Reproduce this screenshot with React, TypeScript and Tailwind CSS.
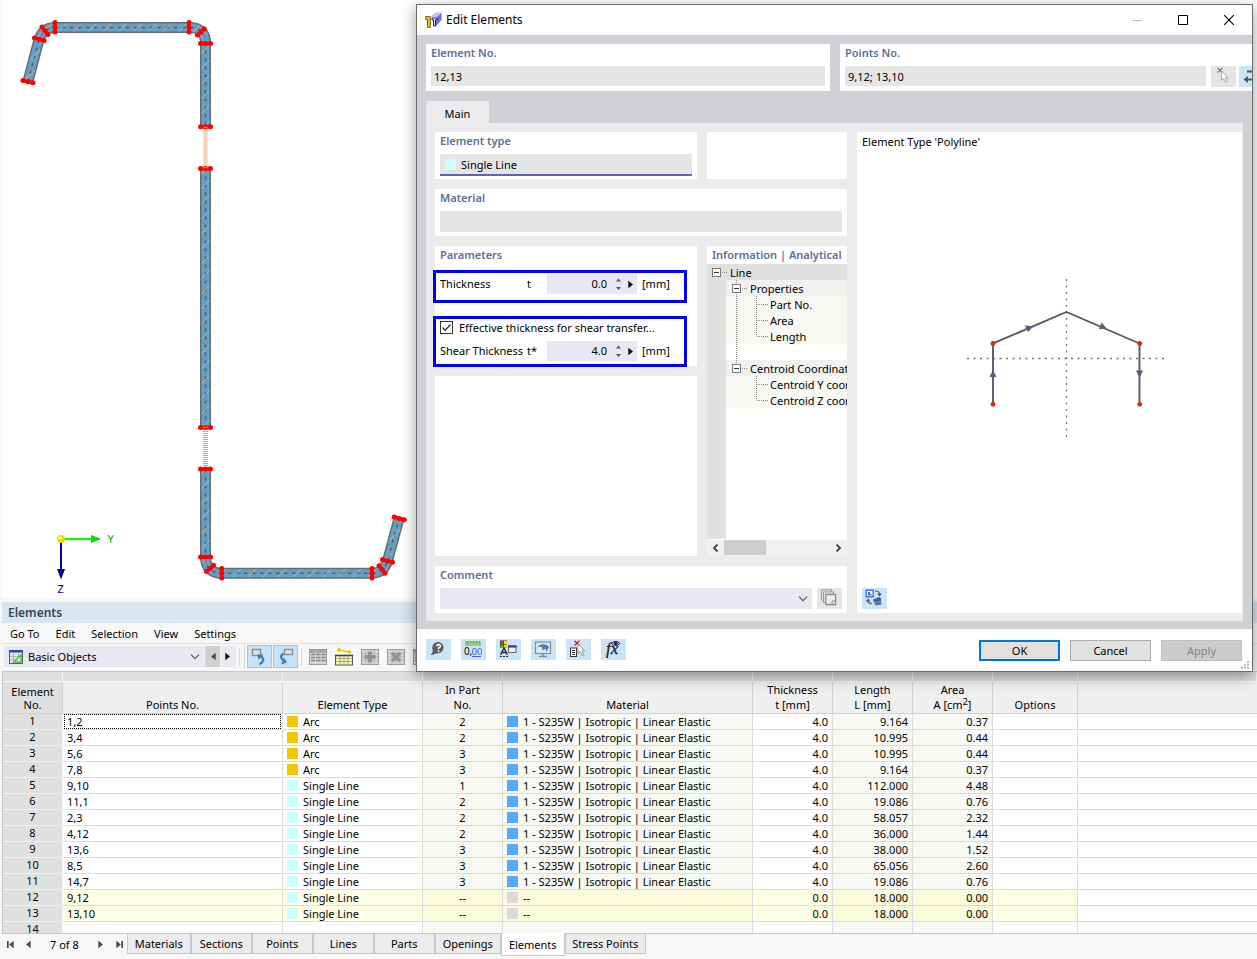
import type { ReactNode } from "react";

type Point = [number, number];

/* ---------- section drawing ---------- */

const MEMBERS = [
  "M28 81.5 L39 39.5 Q43 27.5 55 27.5 L189 27.5 Q205.5 27.5 205.5 43 L205.5 126.5",
  "M205.5 168.5 L205.5 427.5",
  "M205.5 469.5 L205.5 557 Q206 573 221.5 573.2 L372 573.2 Q384 573 387.5 561 L399 518.5",
];

const MARKERS: [Point, Point][] = [
  [[23, 80.5], [33, 82.8]],
  [[34.5, 38], [44, 40.5]],
  [[42, 27], [48, 34.5]],
  [[55, 22.5], [55, 32]],
  [[189, 22.5], [189, 32]],
  [[204.3, 29], [197.5, 35]],
  [[200.5, 43.5], [210.5, 43.5]],
  [[200.5, 126.7], [210.5, 126.7]],
  [[200.5, 168.5], [210.5, 168.5]],
  [[200.5, 427.5], [210.5, 427.5]],
  [[200.5, 469], [210.5, 469]],
  [[200.5, 557], [210.5, 557]],
  [[206.5, 571.5], [213.5, 565.3]],
  [[221.7, 568.5], [221.7, 578]],
  [[372, 568.5], [372, 578]],
  [[379, 565.7], [385, 573.3]],
  [[382.5, 559.5], [392.5, 562.3]],
  [[394.2, 517], [404.2, 519.8]],
];

function SectionDrawing() {
  return (
    <svg width="415" height="598" viewBox="0 0 415 598" role="img" aria-label="Cross-section">
      <defs>
        <pattern id="hatch" width="15" height="15" patternUnits="userSpaceOnUse">
          <path d="M-1 16L16 -1M-1 1L1 -1M14 16L16 14" stroke="#b9b3b0" strokeWidth="1" />
        </pattern>
      </defs>
      <path d="M205.5 128 V168" stroke="#f6e8d6" strokeWidth="5" />
      <path d="M205.5 128 V168" stroke="#f3d8b8" strokeWidth="3" />
      <path d="M205.5 429 V468" stroke="#aaa" strokeWidth="5" strokeDasharray="1 1" />
      <path d="M205.5 429 V468" stroke="#d9a441" strokeWidth="3" strokeDasharray="1 1" />
      {MEMBERS.map((d) => (
        <g key={d} fill="none">
          <path d={d} stroke="#6c6c6c" strokeWidth="11" />
          <path d={d} stroke="#5ea1c9" strokeWidth="8" />
          <path d={d} stroke="#86929b" strokeWidth="1.4" />
          <path d={d} stroke="#50585d" strokeWidth="1.4" strokeDasharray="3 5" />
          <path d={d} stroke="url(#hatch)" strokeWidth="8" />
        </g>
      ))}
      {MARKERS.map(([a, b], i) => (
        <g key={i} fill="#f00">
          <path d={`M${a[0]} ${a[1]} L${b[0]} ${b[1]}`} stroke="#f00" strokeWidth="3.6" />
          <circle cx={a[0]} cy={a[1]} r="2.5" />
          <circle cx={(a[0] + b[0]) / 2} cy={(a[1] + b[1]) / 2} r="2.5" />
          <circle cx={b[0]} cy={b[1]} r="2.5" />
        </g>
      ))}
      <path d="M203 127.5h5M203 167.5h5M203 427.5h5" stroke="#f57c00" strokeWidth="1.6" />
      <path d="M61 539H92" stroke="#0f0" strokeWidth="2" />
      <path d="M91 535L101.500 539L91 543Z" fill="#00e000" />
      <path d="M61 539V570" stroke="#0000c0" strokeWidth="2" />
      <path d="M57 569L61 579.500L65 569Z" fill="#000080" />
      <circle cx="61" cy="539" r="4" fill="#e6d800" />
      <circle cx="60" cy="538" r="2" fill="#fffa40" />
      <text x="107.500" y="543" fontSize="11" fill="#00b000">Y</text>
      <text x="57.500" y="593" fontSize="11" fill="#000080">Z</text>
    </svg>
  );
}

function PolylineDrawing() {
  return (
    <svg width="200" height="160" viewBox="967 279 200 160" role="img" aria-label="Polyline">
      <path d="M967 358.500H1167M1066.500 279V439" stroke="#777" strokeWidth="1.300" strokeDasharray="2 4.500" />
      <path d="M993 404V343.500L1066.500 312L1139.500 343.500V404" fill="none" stroke="#5a586e" strokeWidth="1.900" />
      <g fill="#5a586e">
        <path d="M989.500 377L993 370L996.500 377Z" />
        <path d="M1136 370.500L1139.500 377.500L1143 370.500Z" />
        <path d="M1025 325.200L1033 326.500L1028.200 332Z" />
        <path d="M1101.600 322.500L1106.500 328.200L1099 329.300Z" />
      </g>
      <g fill="#d62e00">
        <circle cx="993" cy="343.500" r="2.400" />
        <circle cx="993" cy="404.300" r="2.400" />
        <circle cx="1139.700" cy="343.500" r="2.400" />
        <circle cx="1139.700" cy="404.300" r="2.400" />
      </g>
    </svg>
  );
}

/* ---------- icons ---------- */

function Svg({ w = 18, h = 18, children }: { w?: number; h?: number; children: ReactNode }) {
  return (
    <svg width={w} height={h} viewBox={`0 0 ${w} ${h}`} fill="none" aria-hidden="true" className="block shrink-0">
      {children}
    </svg>
  );
}

const Chevron = () => (
  <Svg w={10} h={6}>
    <path d="M1 .7L5 4.700L9 .7" stroke="#555" strokeWidth="1.200" />
  </Svg>
);

const AppIcon = () => (
  <Svg w={17} h={17}>
    <path d="M5 5L10 .5H16.500L12 5Z" fill="#c3c3f7" />
    <path d="M12 5L16.500 .5V8L10.500 14.500Z" fill="#6a6ae6" />
    <path d="M7 6H12V8H10.500V14H8.500V8H7Z" fill="#dcdcff" stroke="#1c1c7a" strokeWidth="1" />
    <path d="M.7 4.600H5.300V15.500H2.500V7.500H.7Z" fill="#f3c51b" stroke="#70661c" />
  </Svg>
);

const PickIcon = () => (
  <Svg>
    <path d="M3.500 1L8.500 5.500M8.500 1L3.500 5.500" stroke="#808080" strokeWidth="1.400" />
    <path d="M7.500 4V13.500L9.600 11.500L11.500 15.500L13.200 14.700L11.400 10.800H14.200Z" fill="#fff" stroke="#a8a8a8" />
  </Svg>
);

const ReverseIcon = () => (
  <Svg>
    <path d="M5 4.500H16M14 12.500H4" stroke="#555" strokeWidth="1.800" />
    <path d="M6 9V16L1.500 12.500Z" fill="#555" />
  </Svg>
);

const CopyIcon = () => (
  <Svg>
    <path d="M4 11H1.500V.8H11.500V3M6 13.500H3.500V2.900H13.500V5" stroke="#9a9a9a" />
    <path d="M5.800 5.500H15.500V15.500H5.800Z" fill="#eee" stroke="#8a8a8a" strokeWidth="1.300" />
    <path d="M12 15V12H15" stroke="#8a8a8a" />
  </Svg>
);

const HelpIcon = () => (
  <Svg>
    <path d="M9.500 2A6 5.700 0 1 1 7.500 13.300Q4 15.500 1.500 15Q4 12.800 3.800 10A6 5.700 0 0 1 9.500 2Z" fill="#5e5e5e" />
    <path d="M7.600 6.100Q8 4.500 9.600 4.500Q11.500 4.600 11.400 6.200Q11.300 7.200 9.600 8V9.300M9.600 10.300V11.800" stroke="#fff" strokeWidth="1.600" />
  </Svg>
);

const DecimalsIcon = () => (
  <Svg>
    <rect x="1" y="1" width="16" height="5" fill="#8fd07c" />
    <path d="M3.500 1V3.500M6.500 1V3.500M9.500 1V3.500M12.500 1V3.500M15.500 1V3.500" stroke="#5aa050" />
    <text x="0" y="14.500" fontSize="10" fill="#111">0,</text>
    <text x="7.500" y="14.500" fontSize="9.500" fill="#3b62d0">00</text>
    <path d="M8 16.500H17" stroke="#3b62d0" />
  </Svg>
);

const DisplayIcon = () => (
  <Svg>
    <rect x="1" y=".5" width="7" height="7" fill="#333" />
    <rect x="1.500" y="1" width="3" height="3" fill="#f22" />
    <rect x="5" y="1" width="3" height="3" fill="#fd0" />
    <rect x="1.500" y="4.500" width="3" height="3" fill="#2c2" />
    <rect x="5" y="4.500" width="3" height="3" fill="#fd0" />
    <path d="M1.500 15L5 8L8.500 15M3 12.500H7" stroke="#222" strokeWidth="1.300" />
    <path d="M1 16.500H9" stroke="#222" strokeDasharray="2 1" />
    <rect x="9.500" y="6" width="7.500" height="6.500" fill="#f1f1f1" stroke="#666" />
    <rect x="9" y="5.500" width="8.500" height="2" fill="#2d338f" />
  </Svg>
);

const MonitorIcon = () => (
  <Svg>
    <rect x="1.500" y="2" width="15" height="11.500" fill="#d9e9f6" stroke="#858d94" strokeWidth="1.200" />
    <path d="M3 7.500Q8 1.500 15 6.500L12.500 12L11.500 8.500L8.500 10.500L8 7Q5 6.500 3 7.500Z" fill="#4b7ba8" />
    <path d="M9 13.500V16M5 16.500H13" stroke="#858d94" strokeWidth="1.500" />
  </Svg>
);

const SelectListIcon = () => (
  <Svg>
    <path d="M5.500 .8L10.500 5.500M10.500 .8L5.500 5.500" stroke="#e0202c" strokeWidth="1.500" />
    <rect x="1.500" y="8" width="6" height="8.500" fill="#fff" stroke="#333" />
    <path d="M3 10.500H6M3 12.500H6M3 14.500H6" stroke="#333" />
    <path d="M9 4V13.500L11.200 11.500L13 15.500L14.800 14.700L13 10.800H15.800Z" fill="#fff" stroke="#999" />
  </Svg>
);

const FormulaIcon = () => (
  <Svg>
    <text x="2" y="14" fontSize="17" fontStyle="italic" fill="#222" stroke="#222" strokeWidth=".3" className="font-['Liberation_Serif',serif]">
      fx
    </text>
    <path d="M7.500 3.500Q11.500 -1 16 3.500Q11.500 7.500 7.500 3.500Z" fill="#dfe4ff" stroke="#20206a" />
    <circle cx="11.700" cy="3.300" r="1.900" fill="#20206a" />
  </Svg>
);

const SwapViewIcon = () => (
  <Svg>
    <rect x="1.200" y="1.200" width="7" height="6.600" fill="#fff" stroke="#3d6be0" strokeWidth="1.400" />
    <path d="M3 3V6.500H6.500V5H5V3Z" fill="#3d6be0" />
    <path d="M10 2Q14.500 2 14.500 5M7 14.500Q3 14.500 3 11.500" stroke="#555" strokeWidth="1.200" />
    <path d="M12 4.500H17L14.500 7.500ZM.5 12.500H5.500L3 9.500Z" fill="#555" />
    <path d="M8 10.500L14 8L16 9V12L9 13.500Z" fill="#3f62a5" />
    <path d="M9 14L16 12L16.500 15.500L11 16.500Z" fill="#5a72a8" />
  </Svg>
);

const TableIcon = () => (
  <Svg w={15} h={14}>
    <rect x=".5" y=".5" width="13" height="13" fill="#e3e6ea" stroke="#555b66" />
    <rect x="0" y="0" width="14" height="2.500" fill="#2f47a8" />
    <path d="M4.500 3V13M9.500 3V13M1 6.500H13M1 10H13" stroke="#9ca3af" strokeWidth=".8" />
    <path d="M5 12L12 5V12Z" fill="#d3fac6" stroke="#3cc540" strokeWidth="1.400" />
  </Svg>
);

const JumpUpIcon = () => (
  <Svg>
    <rect x="1.500" y="1.500" width="8" height="6" fill="#dfe3e8" stroke="#8b8b8b" strokeWidth="1.400" />
    <path d="M8.500 16.200Q15.500 12 9.500 8" stroke="#3d7cb8" strokeWidth="2.200" />
    <path d="M6.500 6.500H12.500L7.500 12Z" fill="#3d7cb8" />
  </Svg>
);

const JumpDownIcon = () => (
  <Svg>
    <rect x="7.500" y="1.500" width="8" height="5" fill="#dfe3e8" stroke="#8b8b8b" strokeWidth="1.400" />
    <path d="M6.500 5.500Q1.500 9 6.500 12.500" stroke="#3d7cb8" strokeWidth="2.200" />
    <path d="M4 16.500L10 14.500L7 9.500Z" fill="#3d7cb8" />
  </Svg>
);

const GridIcon = ({ mark }: { mark?: "plus" | "cross" }) => (
  <Svg>
    <rect x=".5" y="1.500" width="17" height="15" fill="#d6d6d6" stroke="#9a9a9a" />
    {!mark && (
      <>
        <path d="M1 3.500H17" stroke="#a8a8a8" strokeWidth="3" />
        <path d="M2 6.500H6M7 6.500H11.500M12.500 6.500H16.500M2 9.500H6M7 9.500H11.500M12.500 9.500H16.500M2 12.500H6M7 12.500H11.500M12.500 12.500H16.500" stroke="#858585" strokeWidth="1.400" />
      </>
    )}
    {mark && <path d="M1 5.500H17M1 9H17M1 12.500H17M5 2V16M9 2V16M13 2V16" stroke="#b8b8b8" />}
    {mark === "plus" && <path d="M9 3.500V14.500M3.500 9H14.500" stroke="#939393" strokeWidth="4" />}
    {mark === "cross" && <path d="M5 5L13 13M13 5L5 13" stroke="#939393" strokeWidth="3.800" />}
  </Svg>
);

const LineTableIcon = () => (
  <Svg>
    <rect x=".5" y="7.500" width="17" height="9.500" fill="#fbf8b0" stroke="#555" />
    <path d="M0 7.500H18" stroke="#444" strokeWidth="1.600" />
    <path d="M1 10.500H17M1 13.500H17M5 8V17M9 8V17M13 8V17" stroke="#aaa890" />
    <path d="M4 2L14 4" stroke="#eec900" strokeWidth="1.600" />
    <circle cx="4" cy="1.900" r="1.800" fill="#eec900" />
    <circle cx="14.500" cy="4" r="1.800" fill="#eec900" />
  </Svg>
);

const Triangle = ({ dir, bar = false, dark = false }: { dir: "left" | "right"; bar?: boolean; dark?: boolean }) => (
  <Svg w={9} h={9}>
    <g transform={dir === "right" ? "translate(9 0) scale(-1 1)" : undefined} fill={dark ? "#111" : "#4a4a4a"}>
      {bar && <path d="M1 1H2.700V8H1Z" />}
      <path d="M7.700 .8V8.200L3 4.500Z" />
    </g>
  </Svg>
);

/* ---------- dialog parts ---------- */

function Panel({ title, htmlFor, className = "", children }: { title?: string; htmlFor?: string; className?: string; children?: ReactNode }) {
  return (
    <section className={`bg-white px-[5px] ${className}`}>
      {title && (
        <label htmlFor={htmlFor} className="block h-[22px] leading-[18px] font-semibold text-[#5c6e98]">
          {title}
        </label>
      )}
      {children}
    </section>
  );
}

function IconButton({ label, disabled = false, children }: { label: string; disabled?: boolean; children: ReactNode }) {
  return (
    <button
      type="button"
      aria-label={label}
      disabled={disabled}
      className={`flex h-[21px] w-[25px] shrink-0 items-center justify-center pr-px pb-px ${disabled ? "bg-[#e5e5e5]" : "bg-[#cbe4f8]"}`}
    >
      {children}
    </button>
  );
}

function NumberRow({ id, label, symbol, value }: { id: string; label: string; symbol: string; value: string }) {
  return (
    <div className="flex h-5 items-center">
      <label htmlFor={id} className="w-[87px] whitespace-nowrap">{label}</label>
      <span className="w-5">{symbol}</span>
      <div className="flex h-5 w-[90px] items-center bg-[#e8e8f2]">
        <input id={id} defaultValue={value} className="w-[60px] bg-transparent text-right outline-none" />
        <button type="button" aria-label={`Step ${label}`} className="ml-2">
          <Svg w={7} h={14}>
            <path d="M1 4.500L3.500 1.500L6 4.500ZM1 10L3.500 13L6 10Z" fill="#555" />
          </Svg>
        </button>
        <button type="button" aria-label={`More for ${label}`} className="ml-[5px]">
          <Triangle dir="right" dark />
        </button>
      </div>
      <span className="ml-[5px]">[mm]</span>
    </div>
  );
}

type Branch = "root" | "group" | "item" | "last" | "gap" | "lastGroup";

const TREE: { label: string; branch: Branch; trunk?: boolean }[] = [
  { label: "Line", branch: "root" },
  { label: "Properties", branch: "group" },
  { label: "Part No.", branch: "item", trunk: true },
  { label: "Area", branch: "item", trunk: true },
  { label: "Length", branch: "last", trunk: true },
  { label: "", branch: "gap", trunk: true },
  { label: "Centroid Coordinates", branch: "lastGroup" },
  { label: "Centroid Y coordinate", branch: "item" },
  { label: "Centroid Z coordinate", branch: "last" },
];

const BRANCH_BG: Record<Branch, string> = {
  root: "bg-[#e0e0e0]",
  group: "bg-[#f1f1f1]",
  lastGroup: "bg-[#f1f1f1]",
  item: "bg-[#f8f9f3]",
  last: "bg-[#f8f9f3]",
  gap: "bg-white",
};

function BranchLines({ branch, trunk }: { branch: Branch; trunk?: boolean }) {
  const dots = { stroke: "#8a8a8a", strokeDasharray: "1 1" };
  if (branch === "root")
    return (
      <Svg w={23} h={16}>
        <rect x="5.500" y="4.500" width="8" height="8" fill="#fff" stroke="#777" />
        <path d="M7 8.500H12" stroke="#333" />
        <path d="M15 8.500H21" {...dots} />
      </Svg>
    );
  if (branch === "group" || branch === "lastGroup")
    return (
      <Svg w={24} h={16}>
        <path d={branch === "group" ? "M10.500 0V16" : "M10.500 0V8"} {...dots} />
        <rect x="6.500" y="4.500" width="8" height="8" fill="#fff" stroke="#777" />
        <path d="M8 8.500H13" stroke="#333" />
        <path d="M16 8.500H22" {...dots} />
      </Svg>
    );
  return (
    <Svg w={44} h={16}>
      {trunk && <path d="M10.500 0V16" {...dots} />}
      {branch === "item" && <path d="M30.500 0V16M31 8.500H42" {...dots} />}
      {branch === "last" && <path d="M30.500 0V8M31 8.500H42" {...dots} />}
    </Svg>
  );
}

function InfoTree() {
  return (
    <section className="flex flex-col overflow-hidden bg-white">
      <h2 className="h-[18px] px-[5px] leading-[18px] font-semibold whitespace-nowrap text-[#5c6e98]">Information | Analytical</h2>
      <ul>
        {TREE.map((row, i) => (
          <li key={i} className={`flex h-4 whitespace-nowrap ${BRANCH_BG[row.branch]}`}>
            {row.branch !== "root" && <span className="w-[19px] shrink-0 bg-[#e0e0e0]" />}
            <BranchLines branch={row.branch} trunk={row.trunk} />
            <span className="leading-[18px]">{row.label}</span>
          </li>
        ))}
      </ul>
      <div className="mb-px w-[19px] flex-1 bg-[#e0e0e0]" />
      <div className="flex h-4 items-center bg-[#f0f0f0]">
        <button type="button" aria-label="Scroll left" className="flex w-[17px] justify-center">
          <Svg w={7} h={9}>
            <path d="M5.500 .5L2 4L5.500 7.500" stroke="#444" strokeWidth="1.800" />
          </Svg>
        </button>
        <span className="h-[15px] w-[42px] self-start bg-[#cdcdcd]" />
        <button type="button" aria-label="Scroll right" className="ml-auto flex w-[17px] justify-center">
          <Svg w={7} h={9}>
            <path d="M1.500 .5L5 4L1.500 7.500" stroke="#444" strokeWidth="1.800" />
          </Svg>
        </button>
      </div>
    </section>
  );
}

const FIELD = "block w-full min-w-0 bg-[#e5e5e5] pl-[3px] outline-none";

function EditDialog() {
  return (
    <div
      role="dialog"
      aria-label="Edit Elements"
      className="absolute top-1 right-1 left-[416px] border border-[#6a6a6a] bg-white shadow-[0_4px_14px_rgba(0,0,0,0.4)]"
    >
      <header className="flex h-[30px] items-center pl-2">
        <AppIcon />
        <h1 className="ml-1 text-xs">Edit Elements</h1>
        <div className="ml-auto flex">
          <button type="button" aria-label="Minimize" disabled className="flex h-7 w-[46px] items-center justify-center">
            <Svg w={10} h={10}><path d="M0 5.500H10" stroke="#bbb" /></Svg>
          </button>
          <button type="button" aria-label="Maximize" className="flex h-7 w-[46px] items-center justify-center">
            <Svg w={10} h={10}><path d="M.5 .5H9.500V9.500H.5Z" stroke="#000" /></Svg>
          </button>
          <button type="button" aria-label="Close" className="flex h-7 w-[46px] items-center justify-center">
            <Svg w={10} h={10}><path d="M0 0L10 10M10 0L0 10" stroke="#000" strokeWidth="1.100" /></Svg>
          </button>
        </div>
      </header>

      <div className="bg-[#d1d0d6] pt-[9px] pb-2 pl-[9px]">
        <div className="flex gap-[10px]">
          <Panel title="Element No." htmlFor="element-no" className="h-[47px] w-[404px] shrink-0">
            <input id="element-no" readOnly defaultValue="12,13" className={`${FIELD} h-5`} />
          </Panel>
          <Panel title="Points No." htmlFor="points-no" className="h-[47px] min-w-0 flex-1 overflow-hidden">
            <div className="-mr-[17px] flex">
              <input id="points-no" readOnly defaultValue="9,12; 13,10" className={`${FIELD} mr-[5px] h-5 flex-1`} />
              <IconButton label="Pick points" disabled><PickIcon /></IconButton>
              <div className="w-[3px] shrink-0" />
              <IconButton label="Reverse points"><ReverseIcon /></IconButton>
            </div>
          </Panel>
        </div>

        <div role="tablist" className="mt-[10px] flex">
          <button type="button" role="tab" aria-selected="true" className="h-[22px] w-[63px] bg-[#ebebeb] pt-1">Main</button>
        </div>

        <div className="mr-[9px] flex gap-[10px] bg-[#ebebeb] pt-[9px] pr-px pb-2 pl-[9px]">
          <div className="grid shrink-0 grid-cols-[262px_140px] grid-rows-[47px_47px_310px_47px] gap-[10px]">
            <Panel title="Element type" htmlFor="element-type">
              <div className="flex h-[22px] items-center border-b-2 border-[#6363ab] bg-[#e5e5e5] pt-px pl-[5px]">
                <span className="size-[11px] bg-[#ccffff]" />
                <select id="element-type" className="ml-[5px] flex-1 appearance-none bg-transparent outline-none">
                  <option>Single Line</option>
                </select>
              </div>
            </Panel>
            <Panel />
            <Panel title="Material" htmlFor="material" className="col-span-2">
              <input id="material" readOnly className={`${FIELD} h-[21px]`} />
            </Panel>

            <div className="flex flex-col gap-[10px]">
              <section className="h-[120px] bg-white">
                <h2 className="h-6 px-[5px] leading-[18px] font-semibold text-[#5c6e98]">Parameters</h2>
                <div className="-ml-0.5 h-[33px] w-[254px] border-[3px] border-[#0000fa] pt-px pl-1">
                  <NumberRow id="thickness" label="Thickness" symbol="t" value="0.0" />
                </div>
                <div className="mt-[13px] -ml-0.5 h-[51px] w-[254px] border-[3px] border-[#0000fa] pt-0.5 pl-1">
                  <label className="flex h-5 items-start gap-1.5 leading-[13px] whitespace-nowrap">
                    <span className="relative block size-[13px]">
                      <input type="checkbox" defaultChecked className="block size-[13px] appearance-none border border-[#333] bg-white" />
                      <span className="pointer-events-none absolute inset-0">
                        <Svg w={13} h={13}><path d="M2.500 6.500L5.200 9.300L10.500 3.500" stroke="#333" strokeWidth="1.300" /></Svg>
                      </span>
                    </span>
                    Effective thickness for shear transfer...
                  </label>
                  <NumberRow id="shear-thickness" label="Shear Thickness" symbol="t*" value="4.0" />
                </div>
              </section>
              <section className="flex-1 bg-white" />
            </div>
            <InfoTree />

            <Panel title="Comment" htmlFor="comment" className="col-span-2">
              <div className="flex gap-[5px]">
                <div className="relative flex-1">
                  <select id="comment" className="block h-[21px] w-full appearance-none bg-[#e8e8f2] outline-none">
                    <option></option>
                  </select>
                  <span className="pointer-events-none absolute top-2 right-1"><Chevron /></span>
                </div>
                <IconButton label="Comment templates" disabled><CopyIcon /></IconButton>
              </div>
            </Panel>
          </div>

          <section className="flex min-w-0 flex-1 flex-col bg-white px-[5px] pb-1">
            <h2 className="leading-5">Element Type 'Polyline'</h2>
            <div className="flex flex-1 items-center justify-center pb-[22px] pl-[34px]">
              <PolylineDrawing />
            </div>
            <IconButton label="Switch view"><SwapViewIcon /></IconButton>
          </section>
        </div>
      </div>

      <footer className="flex h-[42px] items-start pr-[10px] pl-[9px]">
        <div className="flex gap-[10px] pt-[10px]">
          <IconButton label="Help"><HelpIcon /></IconButton>
          <IconButton label="Units and decimals"><DecimalsIcon /></IconButton>
          <IconButton label="Display properties"><DisplayIcon /></IconButton>
          <IconButton label="Visibility"><MonitorIcon /></IconButton>
          <IconButton label="Deselect"><SelectListIcon /></IconButton>
          <IconButton label="Formula"><FormulaIcon /></IconButton>
        </div>
        <div className="ml-auto flex gap-[10px] pt-[11px]">
          <button type="button" className="h-[21px] w-[81px] border-2 border-[#0078d7] bg-[#e1e1e1]">OK</button>
          <button type="button" className="h-[21px] w-[81px] border border-[#adadad] bg-[#e1e1e1]">Cancel</button>
          <button type="button" disabled className="h-[21px] w-[81px] border border-[#bfbfbf] bg-[#cccccc] text-[#838383]">Apply</button>
        </div>
        <span className="absolute right-[3px] bottom-0.5">
          <Svg w={8} h={8}>
            <path d="M6 0h2v2H6zM3 3h2v2H3zM6 3h2v2H6zM0 6h2v2H0zM3 6h2v2H3zM6 6h2v2H6z" fill="#bfbfbf" />
          </Svg>
        </span>
      </footer>
    </div>
  );
}

/* ---------- table panel ---------- */

const ROWS: [string, "Arc" | "Single Line", string, string, string, string][] = [
  ["1,2", "Arc", "2", "4.0", "9.164", "0.37"],
  ["3,4", "Arc", "2", "4.0", "10.995", "0.44"],
  ["5,6", "Arc", "3", "4.0", "10.995", "0.44"],
  ["7,8", "Arc", "3", "4.0", "9.164", "0.37"],
  ["9,10", "Single Line", "1", "4.0", "112.000", "4.48"],
  ["11,1", "Single Line", "2", "4.0", "19.086", "0.76"],
  ["2,3", "Single Line", "2", "4.0", "58.057", "2.32"],
  ["4,12", "Single Line", "2", "4.0", "36.000", "1.44"],
  ["13,6", "Single Line", "3", "4.0", "38.000", "1.52"],
  ["8,5", "Single Line", "3", "4.0", "65.056", "2.60"],
  ["14,7", "Single Line", "3", "4.0", "19.086", "0.76"],
  ["9,12", "Single Line", "--", "0.0", "18.000", "0.00"],
  ["13,10", "Single Line", "--", "0.0", "18.000", "0.00"],
];

const HEADERS: ReactNode[] = [
  <>&nbsp;<br />Points No.</>,
  <>&nbsp;<br />Element Type</>,
  <>In Part<br />No.</>,
  <>&nbsp;<br />Material</>,
  <>Thickness<br />t [mm]</>,
  <>Length<br />L [mm]</>,
  <>Area<br />A [cm<sup className="text-[9px] leading-none">2</sup>]</>,
  <>&nbsp;<br />Options</>,
  null,
];

const CELL = "h-4 border-r border-b border-[#dcdcdf] p-0 leading-[15px]";
const ROW_HEAD = "h-4 border-r border-b border-[#f2f2f2] bg-[#e0e0e0] p-0 text-center align-top font-normal leading-[14px]";

function Swatch({ color, text }: { color: string; text: string }) {
  return (
    <div className="flex h-[15px] items-center gap-[5px] pl-1 whitespace-nowrap">
      <span className={`size-[11px] ${color}`} />
      {text}
    </div>
  );
}

function ElementsTable() {
  return (
    <table className="w-full table-fixed border-separate border-spacing-0">
      <colgroup>
        <col className="w-[60px]" />
        <col className="w-[220px]" />
        <col className="w-[140px]" />
        <col className="w-[80px]" />
        <col className="w-[250px]" />
        <col className="w-[80px]" />
        <col className="w-[80px]" />
        <col className="w-[80px]" />
        <col className="w-[85px]" />
        <col />
      </colgroup>
      <thead>
        <tr>
          {Array.from({ length: 10 }, (_, i) => (
            <td key={i} className="h-[10px] border-r border-b border-[#f5f5f5] bg-[#e0e0e0] p-0" />
          ))}
        </tr>
        <tr>
          <th className="h-8 border-r border-b border-[#d0d0d0] bg-[#e0e0e0] p-0 leading-[13px] font-normal">
            Element<br />No.
          </th>
          {HEADERS.map((h, i) => (
            <th key={i} className="h-8 border-r border-b border-[#d0d0d4] bg-[#efefef] p-0 align-top font-normal last:border-r-0">
              <div className="h-[31px] leading-[15px]">{h}</div>
            </th>
          ))}
        </tr>
      </thead>
      <tbody>
        {ROWS.map(([points, type, part, t, len, area], i) => {
          const open = part === "--";
          const edit = open ? "bg-[#ffffe6]" : "bg-white";
          const calc = open ? "bg-[#fafadc]" : "bg-[#f8f9f3]";
          return (
            <tr key={i}>
              <th className={ROW_HEAD}>{i + 1}</th>
              <td className={`${CELL} ${edit}`}>
                <div className={i === 0 ? "mx-px h-[15px] border border-dotted border-black pl-0.5 leading-[14px]" : "h-[15px] pl-1"}>{points}</div>
              </td>
              <td className={`${CELL} ${edit}`}>
                <Swatch color={type === "Arc" ? "bg-[#f7c500]" : "bg-[#ccffff]"} text={type} />
              </td>
              <td className={`${CELL} ${calc} text-center`}>{part}</td>
              <td className={`${CELL} ${calc}`}>
                <Swatch color={open ? "bg-[#d9d9d9]" : "bg-[#55aaff]"} text={open ? "--" : "1 - S235W | Isotropic | Linear Elastic"} />
              </td>
              <td className={`${CELL} ${edit} pr-1 text-right`}>{t}</td>
              <td className={`${CELL} ${calc} pr-1 text-right`}>{len}</td>
              <td className={`${CELL} ${calc} pr-1 text-right`}>{area}</td>
              <td className={`${CELL} ${edit}`} />
              <td className={`${CELL} border-r-0 bg-white`} />
            </tr>
          );
        })}
        <tr>
          <th className={ROW_HEAD}>14</th>
          {Array.from({ length: 9 }, (_, i) => (
            <td key={i} className={`${CELL} last:border-r-0 ${[2, 3, 5, 6].includes(i) ? "bg-[#f8f9f3]" : "bg-white"}`} />
          ))}
        </tr>
      </tbody>
    </table>
  );
}

const TABS: [string, string][] = [
  ["Materials", "w-[64px]"],
  ["Sections", "w-[61px]"],
  ["Points", "w-[61px]"],
  ["Lines", "w-[61px]"],
  ["Parts", "w-[61px]"],
  ["Openings", "w-[66px]"],
  ["Elements", "w-[64px]"],
  ["Stress Points", "w-[81px]"],
];

function ToolButton({ label, children }: { label: string; children: ReactNode }) {
  return (
    <button type="button" aria-label={label} className="flex h-6 w-[26px] items-center justify-center">
      {children}
    </button>
  );
}

function ToggleButton({ label, children }: { label: string; children: ReactNode }) {
  return (
    <button type="button" aria-label={label} aria-pressed="true" className="mr-px flex h-[23px] w-[25px] items-center justify-center border border-[#90c8f6] bg-[#c8e2f7]">
      {children}
    </button>
  );
}

function TablePanel() {
  return (
    <section className="flex h-[357px] shrink-0 flex-col pl-0.5">
      <h2 className="h-[21px] bg-[#d8e5f2] pl-1.5 text-xs leading-[21px] font-semibold text-[#3c4450]">Elements</h2>
      <nav className="flex h-5 items-center gap-4 pt-0.5 pl-2">
        {["Go To", "Edit", "Selection", "View", "Settings"].map((m) => (
          <button key={m} type="button">{m}</button>
        ))}
      </nav>
      <div className="flex h-7 items-center border-t border-[#e0e0e0] pb-0.5 pl-0.5">
        <div className="relative flex h-[21px] w-[200px] items-center bg-[#e8e8f2] pl-[5px]">
          <TableIcon />
          <select aria-label="Table group" className="ml-1 flex-1 appearance-none bg-transparent outline-none">
            <option>Basic Objects</option>
          </select>
          <span className="pointer-events-none absolute right-1"><Chevron /></span>
        </div>
        <button type="button" aria-label="Previous group" className="ml-px flex h-[21px] w-[15px] items-center justify-center bg-[#d0d0d0]"><Triangle dir="left" /></button>
        <button type="button" aria-label="Next group" className="ml-px flex h-[21px] w-[15px] items-center justify-center bg-[#e8e8f2]"><Triangle dir="right" dark /></button>
        <span className="ml-[3px] h-[18px] w-px bg-[#d5d5d5]" />
        <span className="mr-0.5 ml-1 h-[25px] w-px bg-[#dcdcdc]" />
        <ToggleButton label="Jump to graphic"><JumpUpIcon /></ToggleButton>
        <ToggleButton label="Jump to table"><JumpDownIcon /></ToggleButton>
        <span className="mr-[3px] ml-0.5 h-[18px] w-px bg-[#d5d5d5]" />
        <ToolButton label="Table view"><GridIcon /></ToolButton>
        <ToolButton label="Line table"><LineTableIcon /></ToolButton>
        <ToolButton label="Add row"><GridIcon mark="plus" /></ToolButton>
        <ToolButton label="Delete row"><GridIcon mark="cross" /></ToolButton>
        <ToolButton label="Empty row"><GridIcon /></ToolButton>
      </div>
      <div className="min-h-0 flex-1 overflow-hidden border border-r-0 border-[#c6c6d0] bg-white">
        <ElementsTable />
      </div>
      <div className="flex h-[25px]">
        <div className="flex h-[21px] items-center pl-1">
          <button type="button" aria-label="First table"><Triangle dir="left" bar /></button>
          <button type="button" aria-label="Previous table" className="ml-2"><Triangle dir="left" /></button>
          <span className="mx-[18px]">7 of 8</span>
          <button type="button" aria-label="Next table"><Triangle dir="right" /></button>
          <button type="button" aria-label="Last table" className="ml-[9px]"><Triangle dir="right" bar /></button>
        </div>
        <div role="tablist" className="ml-[3px] flex items-start">
          {TABS.map(([name, width]) => (
            <button
              key={name}
              type="button"
              role="tab"
              aria-selected={name === "Elements"}
              className={`${width} border border-t-0 border-[#c6c6d0] whitespace-nowrap ${
                name === "Elements" ? "-mt-px h-[23px] bg-white pt-0.5" : "h-5 bg-[#ececec]"
              }`}
            >
              {name}
            </button>
          ))}
        </div>
      </div>
    </section>
  );
}

export default function App() {
  return (
    <main className="relative flex h-screen flex-col overflow-hidden bg-[#f7f7f7] font-['Noto_Sans',sans-serif] text-[11px] leading-4 text-black">
      <div className="mb-1 ml-0.5 min-h-0 flex-1 overflow-hidden bg-white">
        <div className="-ml-0.5">
          <SectionDrawing />
        </div>
      </div>
      <TablePanel />
      <EditDialog />
    </main>
  );
}
